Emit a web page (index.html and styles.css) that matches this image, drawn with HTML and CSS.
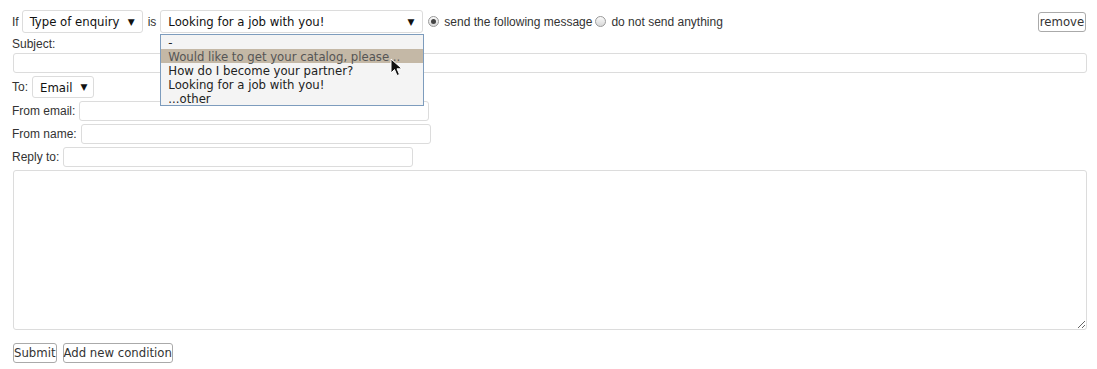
FILE: index.html
```html
<!DOCTYPE html>
<html lang="en">
<head>
    <meta charset="UTF-8">
    <title>Conditional message</title>
    <link rel="stylesheet" href="styles.css">
</head>
<body>
    <form class="form">
        <!-- Condition row -->
        <div class="rule">
            <span class="label">If</span>
            <div class="select field-type">Type of enquiry <span class="arrow">&#9660;</span></div>
            <span class="label">is</span>
            <div class="select field-value">
                Looking for a job with you! <span class="arrow">&#9660;</span>
                <ul class="options">
                    <li>-</li>
                    <li class="hover">Would like to get your catalog, please...</li>
                    <li>How do I become your partner?</li>
                    <li>Looking for a job with you!</li>
                    <li>...other</li>
                </ul>
                <svg class="cursor" width="14" height="20" viewBox="0 0 14 20">
                    <path d="M1 1 L1 15 L4.5 11.5 L7 17.5 L9.5 16.5 L7 10.8 L12 10.8 Z" fill="#111" stroke="#fff" stroke-width="1"/>
                </svg>
            </div>
            <label class="radio"><span class="dot checked"></span>send the following message</label>
            <label class="radio"><span class="dot"></span>do not send anything</label>
            <button type="button" class="btn remove">remove</button>
        </div>

        <!-- Message -->
        <div class="block-label">Subject:</div>
        <input type="text" class="input wide">

        <div class="row">
            <span class="label">To:</span>
            <div class="select field-to">Email <span class="arrow">&#9660;</span></div>
        </div>
        <div class="row">
            <span class="label">From email:</span>
            <input type="text" class="input short">
        </div>
        <div class="row">
            <span class="label">From name:</span>
            <input type="text" class="input short">
        </div>
        <div class="row">
            <span class="label">Reply to:</span>
            <input type="text" class="input short">
        </div>
        <textarea class="body-text"></textarea>

        <div class="actions">
            <button type="button" class="btn">Submit</button>
            <button type="button" class="btn">Add new condition</button>
        </div>
    </form>
</body>
</html>
```

FILE: styles.css
```css
/* Basic Reset */
* {
    margin: 0;
    padding: 0;
    box-sizing: border-box;
}

body {
    font-family: "Liberation Sans", Arial, sans-serif;
    font-size: 12px;
    color: #333;
    background-color: #fff;
    padding: 10px 11px 0 12px;
}

.label {
    margin-right: 4px;
    white-space: nowrap;
}

/* Condition row */
.rule {
    display: flex;
    align-items: center;
    height: 23px;
}

.rule .label {
    margin-right: 3px;
}

.rule .label + .field-value {
    margin-left: 1px;
}

.select {
    position: relative;
    display: flex;
    align-items: center;
    justify-content: space-between;
    flex-shrink: 0;
    white-space: nowrap;
    height: 23px;
    padding: 0 7px 0 7px;
    border: 1px solid #dcdcdc;
    border-radius: 3px;
    background-color: #fff;
    font-family: "DejaVu Sans Condensed", "DejaVu Sans", sans-serif;
    font-stretch: condensed;
    font-size: 13px;
    color: #111;
    margin-right: 5px;
}

.arrow {
    font-family: "DejaVu Sans", sans-serif;
    font-stretch: normal;
    font-size: 9px;
    margin-left: 8px;
}

.field-type {
    width: 121px;
}

.field-value {
    width: 263px;
    padding-right: 8px;
}

.field-to {
    width: 62px;
    height: 22px;
}

/* Open option list */
.options {
    position: absolute;
    left: -1px;
    top: 23px;
    width: 264px;
    list-style: none;
    background-color: #f4f4f4;
    border: 1px solid #7d9cbd;
    color: #222;
    z-index: 2;
}

.options li {
    height: 14px;
    line-height: 15px;
    padding-left: 7px;
    white-space: nowrap;
}

.options li.hover {
    background-color: #c4b8a6;
    color: #555;
}

.cursor {
    position: absolute;
    left: 229px;
    top: 47px;
    z-index: 3;
}

.radio {
    display: flex;
    align-items: center;
    margin-right: 3px;
    white-space: nowrap;
}

.dot {
    width: 11px;
    height: 11px;
    border-radius: 50%;
    border: 1px solid #999;
    background: linear-gradient(#fafafa, #d8d8d8);
    margin-right: 5px;
    position: relative;
}

.dot.checked::after {
    content: "";
    position: absolute;
    left: 2px;
    top: 2px;
    width: 5px;
    height: 5px;
    border-radius: 50%;
    background-color: #444;
}

.btn {
    font-family: "DejaVu Sans Condensed", "DejaVu Sans", sans-serif;
    font-stretch: condensed;
    font-size: 13px;
    color: #333;
    background-color: #fff;
    border: 1px solid #aaa;
    border-radius: 3px;
    padding: 1px 0;
    height: 20px;
    line-height: 16px;
}

.remove {
    margin-left: auto;
    width: 48px;
}

/* Message fields */
.block-label {
    height: 20px;
    line-height: 22px;
}

.input {
    display: block;
    height: 20px;
    border: 1px solid #dcdcdc;
    border-radius: 3px;
    background-color: #fff;
}

.wide {
    width: 1074px;
    margin-left: 1px;
}

.short {
    width: 350px;
}

.row {
    display: flex;
    align-items: center;
    margin-top: 3px;
}

.row:first-of-type {
    margin-top: 4px;
}

.body-text {
    display: block;
    width: 1074px;
    height: 160px;
    margin: 3px 0 0 1px;
    border: 1px solid #dcdcdc;
    border-radius: 3px;
}

.actions {
    display: flex;
    gap: 6px;
    margin-top: 13px;
    margin-left: 1px;
}

.actions .btn {
    padding: 1px 0;
}
```
